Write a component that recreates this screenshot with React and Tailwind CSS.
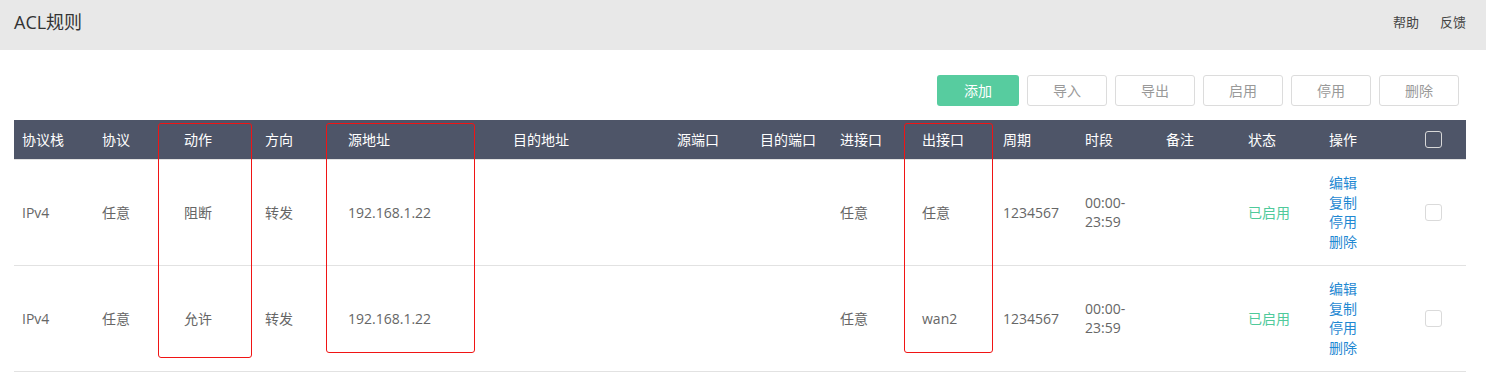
import React from "react";

const cols = [
  { label: "协议栈", w: "w-[80px]" },
  { label: "协议", w: "w-[82px]" },
  { label: "动作", w: "w-[81px]" },
  { label: "方向", w: "w-[83px]" },
  { label: "源地址", w: "w-[165px]" },
  { label: "目的地址", w: "w-[164px]" },
  { label: "源端口", w: "w-[83px]" },
  { label: "目的端口", w: "w-[80px]" },
  { label: "进接口", w: "w-[82px]" },
  { label: "出接口", w: "w-[81px]" },
  { label: "周期", w: "w-[82px]" },
  { label: "时段", w: "w-[81px]" },
  { label: "备注", w: "w-[82px]" },
  { label: "状态", w: "w-[81px]" },
  { label: "操作", w: "w-[96px]" },
  { label: "", w: "w-[49px]" },
];

const rules = [
  { stack: "IPv4", proto: "任意", action: "阻断", dir: "转发", src: "192.168.1.22", inIf: "任意", outIf: "任意" },
  { stack: "IPv4", proto: "任意", action: "允许", dir: "转发", src: "192.168.1.22", inIf: "任意", outIf: "wan2" },
];

const buttons = ["导入", "导出", "启用", "停用", "删除"];

const App = () => {
  return (
    <div className="w-[1486px] h-[386px] bg-white overflow-hidden font-['Open_Sans','Noto_Sans_CJK_SC',sans-serif] text-[14px] text-[#666]">
      {/* top bar */}
      <div className="h-[50px] bg-[#e8e8e8] flex items-start justify-between px-[14px] pt-[9px]">
        <div className="text-[18px] text-[#333] leading-[26px]">ACL规则</div>
        <div className="flex gap-[21px] text-[13px] text-[#444] pt-[3px] pr-[6px] leading-[20px]">
          <span>帮助</span>
          <span>反馈</span>
        </div>
      </div>

      {/* toolbar */}
      <div className="flex justify-end gap-[8px] mt-[25px] mr-[27px]">
        <button className="w-[82px] h-[31px] rounded-[3px] bg-[#57cc9f] text-white text-[14px]">添加</button>
        {buttons.map((b) => (
          <button
            key={b}
            className="w-[80px] h-[31px] rounded-[3px] border border-[#dcdcdc] bg-white text-[#999] text-[14px]"
          >
            {b}
          </button>
        ))}
      </div>

      {/* table */}
      <div className="relative mx-[14px] mt-[14px]">
        <table className="table-fixed w-[1452px] border-collapse">
          <colgroup>
            {cols.map((c, i) => (
              <col key={i} className={c.w} />
            ))}
          </colgroup>
          <thead>
            <tr className="h-[39px] bg-[#4e5568] text-white">
              {cols.map((c, i) => (
                <th key={i} className="px-2 text-left font-normal">
                  {i === cols.length - 1 ? (
                    <span className="block w-[17px] h-[17px] rounded-[3px] border border-[#d8d8d8]"></span>
                  ) : (
                    c.label
                  )}
                </th>
              ))}
            </tr>
          </thead>
          <tbody>
            {rules.map((r, i) => (
              <tr key={i} className="h-[106px] border-t border-[#e2e2e2] last:border-b">
                <td className="px-2">{r.stack}</td>
                <td className="px-2">{r.proto}</td>
                <td className="px-2">{r.action}</td>
                <td className="px-2">{r.dir}</td>
                <td className="px-2">{r.src}</td>
                <td className="px-2"></td>
                <td className="px-2"></td>
                <td className="px-2"></td>
                <td className="px-2">{r.inIf}</td>
                <td className="px-2">{r.outIf}</td>
                <td className="px-2">1234567</td>
                <td className="px-2 leading-[19px]">
                  00:00-
                  <br />
                  23:59
                </td>
                <td className="px-2"></td>
                <td className="px-2 text-[#4fca9b]">已启用</td>
                <td className="px-2 leading-[19.5px] text-[#1f88d2]">
                  <div>编辑</div>
                  <div>复制</div>
                  <div>停用</div>
                  <div>删除</div>
                </td>
                <td className="px-2">
                  <span className="block w-[17px] h-[17px] rounded-[3px] border border-[#dadada]"></span>
                </td>
              </tr>
            ))}
          </tbody>
        </table>

        {/* annotation boxes */}
        <div className="absolute left-[144px] top-[3px] w-[94px] h-[235px] border border-[#f01414] rounded-[3px] pointer-events-none"></div>
        <div className="absolute left-[312px] top-[3px] w-[149px] h-[230px] border border-[#f01414] rounded-[3px] pointer-events-none"></div>
        <div className="absolute left-[890px] top-[3px] w-[89px] h-[230px] border border-[#f01414] rounded-[3px] pointer-events-none"></div>
      </div>
    </div>
  );
};

export default App;
